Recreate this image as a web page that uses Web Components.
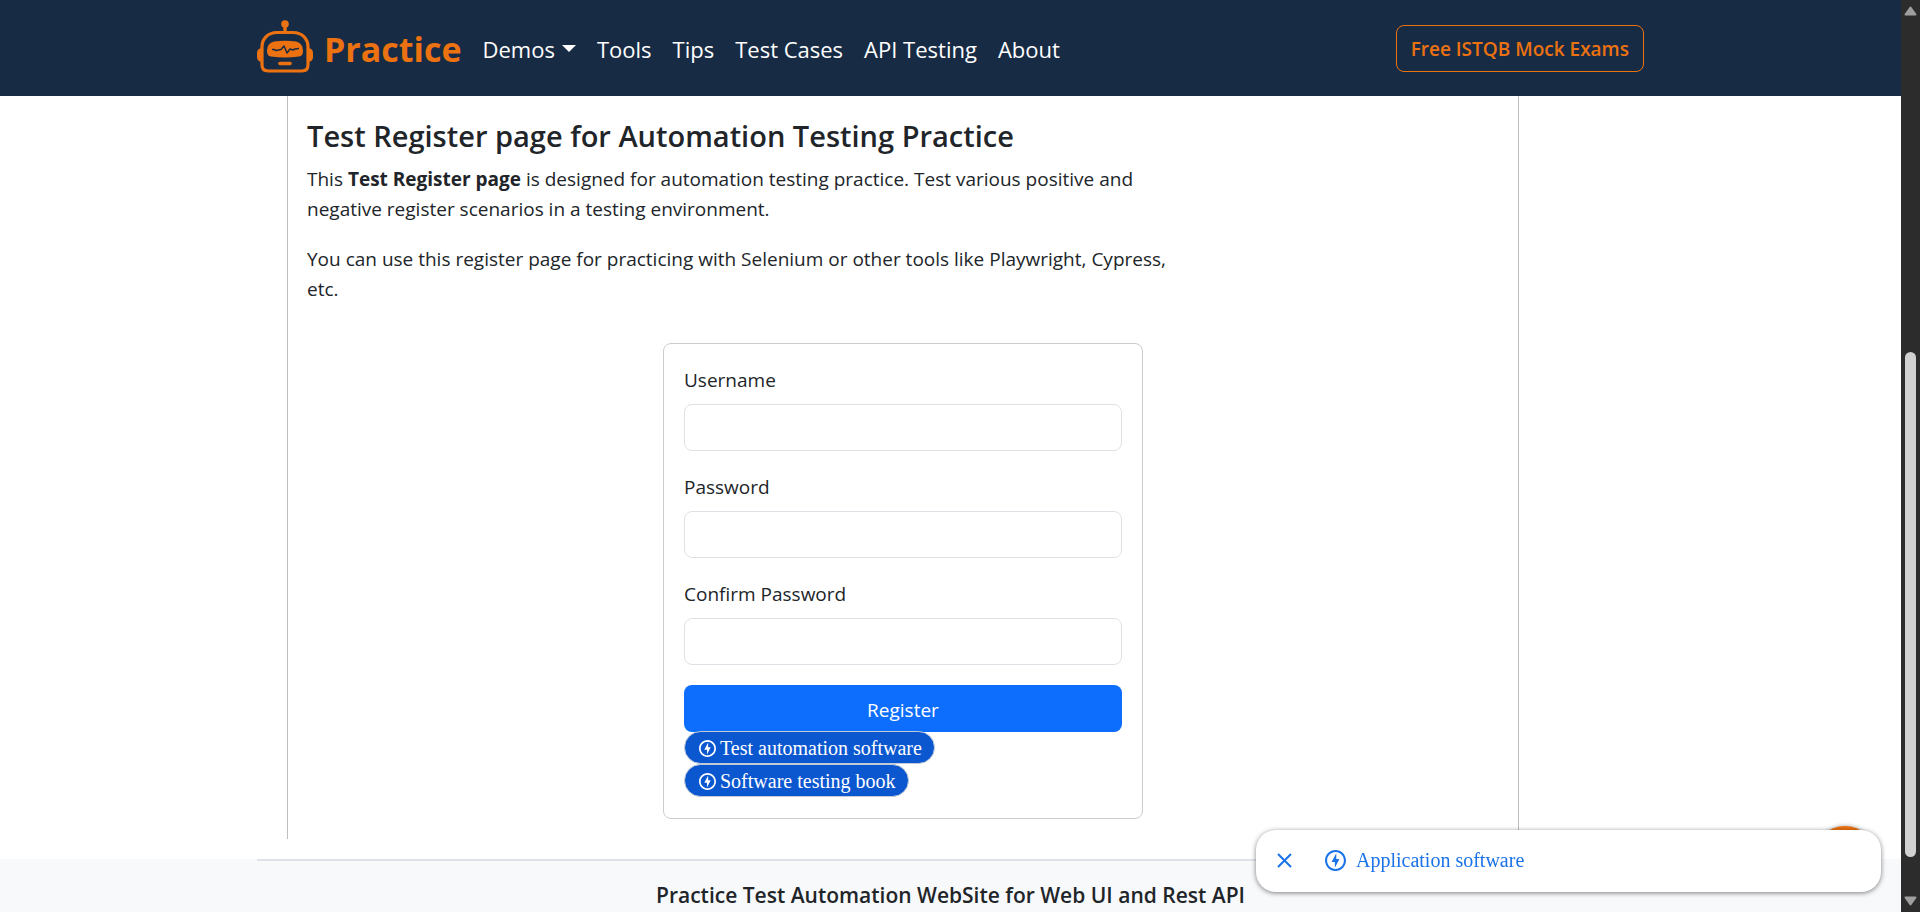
<!DOCTYPE html>
<html lang="en">
<head>
<meta charset="utf-8">
<title>Test Register page</title>
<style>
  html, body { margin: 0; height: 100%; }
  body { font-family: "Open Sans", "Noto Sans", sans-serif; font-size: 19px; line-height: 30px; color: #212529; background: #fff; overflow: hidden; }
</style>
</head>
<body>
<practice-app></practice-app>

<script>
const define = (name, html) => customElements.define(name, class extends HTMLElement {
  constructor() {
    super();
    this.attachShadow({ mode: 'open' }).innerHTML = html;
  }
});

define('robot-logo', `
<style>:host{display:block;width:56px;height:54px;flex:none}svg{display:block}</style>
<svg width="56" height="54" viewBox="0 0 56 54" fill="none" aria-hidden="true">
  <circle cx="28" cy="4" r="3.8" fill="#ec7211"/>
  <path d="M28 5v8" stroke="#ec7211" stroke-width="3.4"/>
  <path d="M20 12.5H36C45 12.5 51 18.500 51 27V45Q51 51 45 51H11Q5 51 5 45V27C5 18.500 11 12.500 20 12.500Z" stroke="#ec7211" stroke-width="3.2"/>
  <path d="M5 28Q0 28.500 0 33V37Q0 41.500 5 42ZM51 28Q56 28.500 56 33V37Q56 41.500 51 42Z" fill="#ec7211"/>
  <path d="M17 21.500Q28 20 39 21.500Q46 23 46 31Q46 36 42 36.500Q28 38.500 14 36.500Q10 36 10 31Q10 23 17 21.500Z" fill="#ec7211"/>
  <path d="M15 29.500H17L19 30.500L24 29.500L27 26L30 33L33 29L36 30L38 29L42 28.500" stroke="#182b44" stroke-width="1.500" stroke-linejoin="round"/>
  <path d="M23 43.500H33" stroke="#ec7211" stroke-width="3.600" stroke-linecap="round"/>
</svg>`);

define('bolt-icon', `
<style>:host{display:block;flex:none;width:20px;height:20px}svg{display:block;width:100%;height:100%}</style>
<svg viewBox="2 2 20 20" fill="currentColor" aria-hidden="true">
  <path d="M12 2.020c-5.510 0-9.980 4.470-9.980 9.980s4.470 9.980 9.980 9.980 9.980-4.470 9.980-9.980S17.510 2.020 12 2.020zm0 17.960c-4.400 0-7.980-3.580-7.980-7.980S7.600 4.020 12 4.020 19.980 7.600 19.980 12 16.400 19.980 12 19.980zM12.750 5l-4.500 8.500h3.140V19l4.360-8.500h-3z"/>
</svg>`);

define('site-header', `
<style>
  :host{display:block;background:#182b44;flex:none}
  .bar{display:flex;align-items:center;box-sizing:border-box;max-width:1387px;height:96px;margin:0 auto;padding-top:1px}
  a{text-decoration:none;color:inherit}
  .brand{display:flex;align-items:center;gap:11px;color:#ec7211;font-size:34px;font-weight:700;line-height:54px;margin-right:21px}
  .brand robot-logo{margin-top:-4px}
  nav{display:flex;gap:21px;color:#fff;font-size:22px;line-height:36px}
  nav button{all:unset;display:flex;align-items:center;gap:7px;cursor:pointer}
  nav button::after{content:"";border:7px solid transparent;border-top-color:#fff;border-bottom:0}
  .cta{margin-left:auto;border:1px solid #ec7211;border-radius:8px;padding:8px 14px 7px;color:#ec7211;font-weight:600}
</style>
<div class="bar">
  <a class="brand" href="#"><robot-logo></robot-logo>Practice</a>
  <nav><button type="button">Demos</button><a href="#">Tools</a><a href="#">Tips</a><a href="#">Test Cases</a><a href="#">API Testing</a><a href="#">About</a></nav>
  <a class="cta" href="#">Free ISTQB Mock Exams</a>
</div>`);

customElements.define('form-field', class extends HTMLElement {
  constructor() {
    super();
    this.attachShadow({ mode: 'open' }).innerHTML = `
<style>
  :host{display:block;margin-bottom:20px}
  label{display:block;padding-top:1px;margin-bottom:9px}
  input{display:block;box-sizing:border-box;width:100%;height:47px;border:1px solid #dee2e6;border-radius:8px;padding:8px 15px;font:inherit;background:#fff}
</style>
<label for="field"><slot></slot></label><input id="field">`;
  }
  connectedCallback() {
    this.shadowRoot.querySelector('input').type = this.getAttribute('type') || 'text';
  }
});

define('topic-pill', `
<style>
  :host{display:block;width:fit-content}
  a{display:flex;align-items:center;gap:4px;box-sizing:border-box;height:33px;padding:1px 12px 0 14px;border:1px solid #c5cbd6;border-radius:17px;background:#0b57d0;color:#fff;font:20px/30px "Liberation Serif",serif;text-decoration:none}
  bolt-icon{width:17px;height:17px}
</style>
<a href="#"><bolt-icon></bolt-icon><slot></slot></a>`);

define('register-form', `
<style>
  :host{display:block;box-sizing:border-box;width:480px;max-width:100%;border:1px solid #ccc;border-radius:8px;padding:20px}
  button{display:block;width:100%;height:47px;border:0;border-radius:8px;padding:2px 0 0;background:#0d6efd;color:#fff;font:inherit}
  .topics{margin:-1px 0 1px}
</style>
<form>
  <form-field>Username</form-field>
  <form-field type="password">Password</form-field>
  <form-field type="password">Confirm Password</form-field>
  <button type="button">Register</button>
</form>
<div class="topics">
  <topic-pill>Test automation software</topic-pill>
  <topic-pill>Software testing book</topic-pill>
</div>`);

define('register-page', `
<style>
  :host{display:block;box-sizing:border-box;width:100%;max-width:1387px;margin:0 auto;padding:0 125px 0 30px}
  main{border:solid #bfbfbf;border-width:0 1px;padding:21px 19px 20px}
  h1{margin:0 0 9px;font-size:29px;line-height:38px;font-weight:600}
  p{margin:0 0 20px;max-width:75%}
  register-form{margin:39px auto 0}
</style>
<main>
  <h1>Test Register page for Automation Testing Practice</h1>
  <p>This <b>Test Register page</b> is designed for automation testing practice. Test various positive and negative register scenarios in a testing environment.</p>
  <p>You can use this register page for practicing with Selenium or other tools like Playwright, Cypress, etc.</p>
  <register-form></register-form>
</main>`);

define('site-footer', `
<style>
  :host{display:block;flex:1;margin-top:20px;background:#f8f9fb}
  div{max-width:1387px;margin:0 auto;border-top:2px solid #dee2e6;padding-top:19px;text-align:center}
  h2{margin:0;font-size:21px;line-height:30px;font-weight:600}
</style>
<footer><div><h2>Practice Test Automation WebSite for Web UI and Rest API</h2></div></footer>`);

define('anchor-bar', `
<style>
  :host{position:fixed;right:39px;bottom:20px;width:625px;z-index:2}
  .disc{position:absolute;right:5px;top:-4px;width:62px;height:62px;border-radius:50%;background:#ec7211;box-shadow:0 0 4px rgba(0,0,0,.35)}
  .bar{position:relative;display:flex;align-items:center;box-sizing:border-box;height:62px;padding:0 21px 2px;border-radius:20px;background:#fff;box-shadow:0 1px 5px rgba(0,0,0,.5)}
  button{all:unset;display:flex;margin-right:33px;color:#1a73e8;cursor:pointer}
  a{display:flex;align-items:center;gap:10px;color:#1a73e8;font:20px/30px "Liberation Serif",serif;text-decoration:none}
  bolt-icon{width:21px;height:21px}
</style>
<div class="disc"></div>
<div class="bar">
  <button type="button" aria-label="Close"><svg width="15" height="15" viewBox="0 0 15 15" fill="none" stroke="currentColor" stroke-width="2"><path d="M1 1L14 14M14 1L1 14"/></svg></button>
  <a href="#"><bolt-icon></bolt-icon>Application software</a>
</div>`);

define('page-scrollbar', `
<style>
  :host{display:flex;flex-direction:column;align-items:center;justify-content:space-between;box-sizing:border-box;background:#2c2c2c;padding:6px 0}
  svg{display:block}
  .track{flex:1;display:flex;flex-direction:column;justify-content:flex-end;padding-bottom:39px}
  .thumb{width:11px;height:60%;border-radius:6px;background:#d1d1d1}
</style>
<svg width="13" height="10"><path d="M6.500 1.500L11.500 8.500H1.500Z" fill="#9f9f9f" stroke="#9f9f9f" stroke-width="2" stroke-linejoin="round"/></svg>
<div class="track"><div class="thumb"></div></div>
<svg width="13" height="10"><path d="M6.500 8.500L11.500 1.500H1.500Z" fill="#9f9f9f" stroke="#9f9f9f" stroke-width="2" stroke-linejoin="round"/></svg>`);

define('practice-app', `
<style>
  :host{display:grid;grid-template-columns:minmax(0,1fr) 19px;height:100vh}
  .page{display:flex;flex-direction:column;min-height:0;overflow:hidden}
  register-page{flex:none}
</style>
<div class="page">
  <site-header></site-header>
  <register-page></register-page>
  <site-footer></site-footer>
</div>
<page-scrollbar></page-scrollbar>
<anchor-bar></anchor-bar>`);
</script>
</body>
</html>
